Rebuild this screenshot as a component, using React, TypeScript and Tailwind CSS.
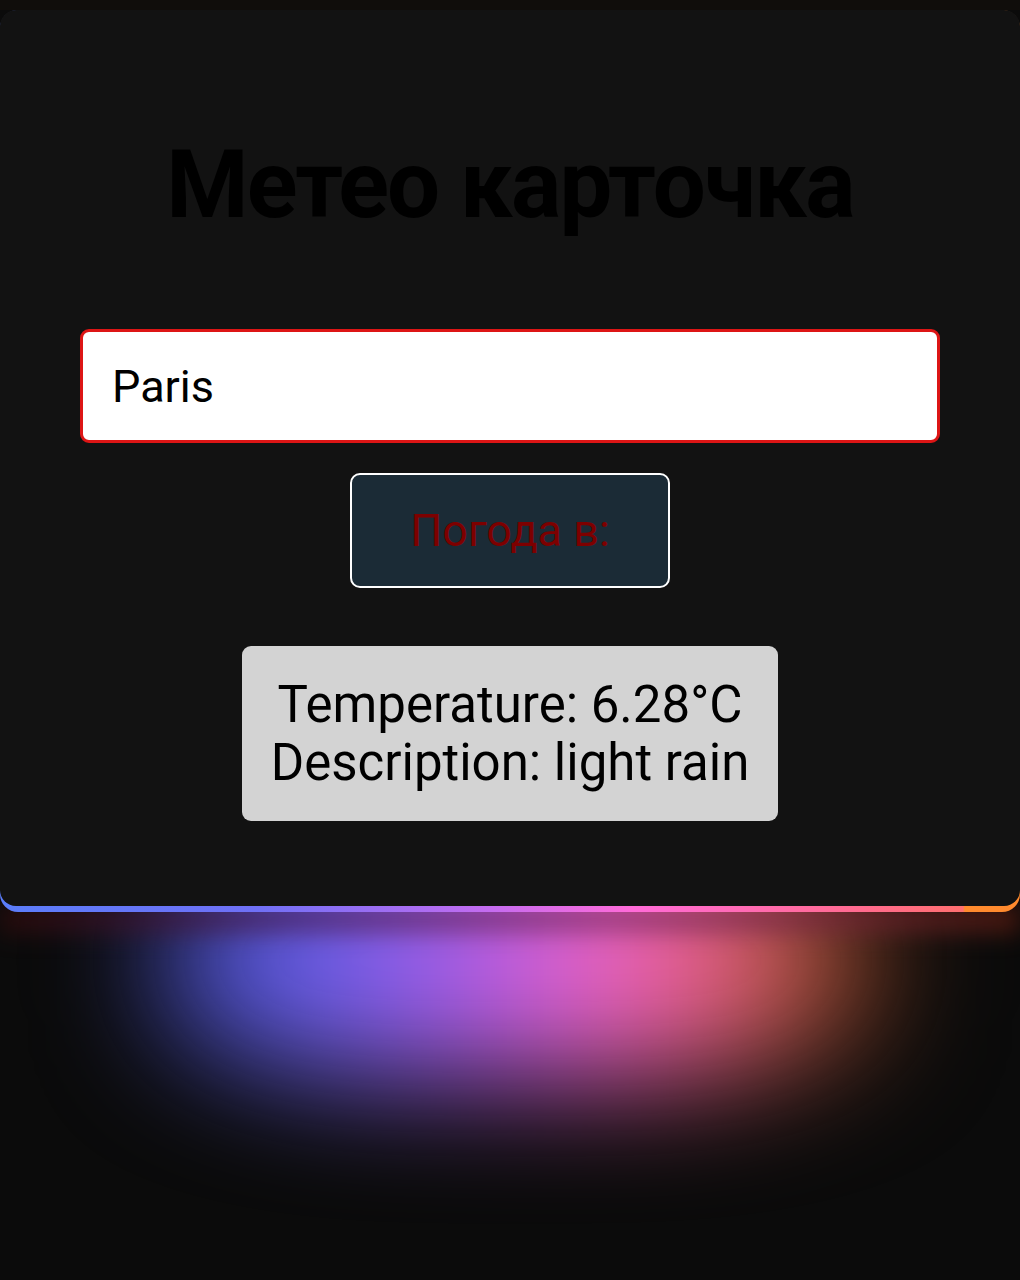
import { useState } from "react";

export default function App() {
  const [city, setCity] = useState("Paris");

  return (
    <div className="relative min-h-screen w-full overflow-hidden bg-[#0b0b0b] font-['Roboto',_'Noto_Sans',_sans-serif]">
      {/* GLOW under card */}
      <div className="pointer-events-none absolute left-[160px] right-[140px] top-[840px] h-[240px] rounded-[35%] bg-[linear-gradient(90deg,#3a48b8_0%,#6a60ec_22%,#a85ce8_42%,#ec62cc_60%,#ea6082_76%,#a4502c_92%,#5a2a14_100%)] blur-[60px]" />
      <div className="pointer-events-none absolute left-0 right-0 top-[906px] h-[26px] bg-[linear-gradient(90deg,#3a0c0c_0%,#4a2060_30%,#8a3070_60%,#6a2010_100%)] opacity-70 blur-[12px]" />

      <div className="relative h-[10px] bg-[#100d0b]" />

      {/* CARD */}
      <div className="relative rounded-[18px] bg-[linear-gradient(90deg,#5b7dfa_0%,#6f70f6_25%,#c46cf0_48%,#ff6bd8_62%,#ff6b8c_85%,#ff6f70_94.4%,#ff8a2e_94.6%,#ff8a2e_100%)] pb-[6px]">
        <div className="flex flex-col items-center rounded-[16px] bg-[#121212] pb-[85px] pt-[128px]">
          <h1 className="text-[94px] font-bold leading-none tracking-[-1.8px] text-black">
            Метео карточка
          </h1>

          <input
            value={city}
            onChange={(e) => setCity(e.target.value)}
            className="mt-[97px] h-[114px] w-[860px] rounded-[9px] border-[3px] border-[#dd1515] bg-white px-[29px] text-[45px] text-black outline-none"
          />

          <button className="mt-[30px] h-[115px] w-[320px] rounded-[10px] border-2 border-white bg-[#1b2b36] text-[45px] text-[#7d0000]">
            Погода в:
          </button>

          <div className="mt-[58px] rounded-[9px] bg-[#d3d3d3] px-[29px] pb-[29px] pt-[30px] text-center text-[51px] leading-[58px] text-black">
            <p>Temperature: 6.28°C</p>
            <p>Description: light rain</p>
          </div>
        </div>
      </div>
    </div>
  );
}
